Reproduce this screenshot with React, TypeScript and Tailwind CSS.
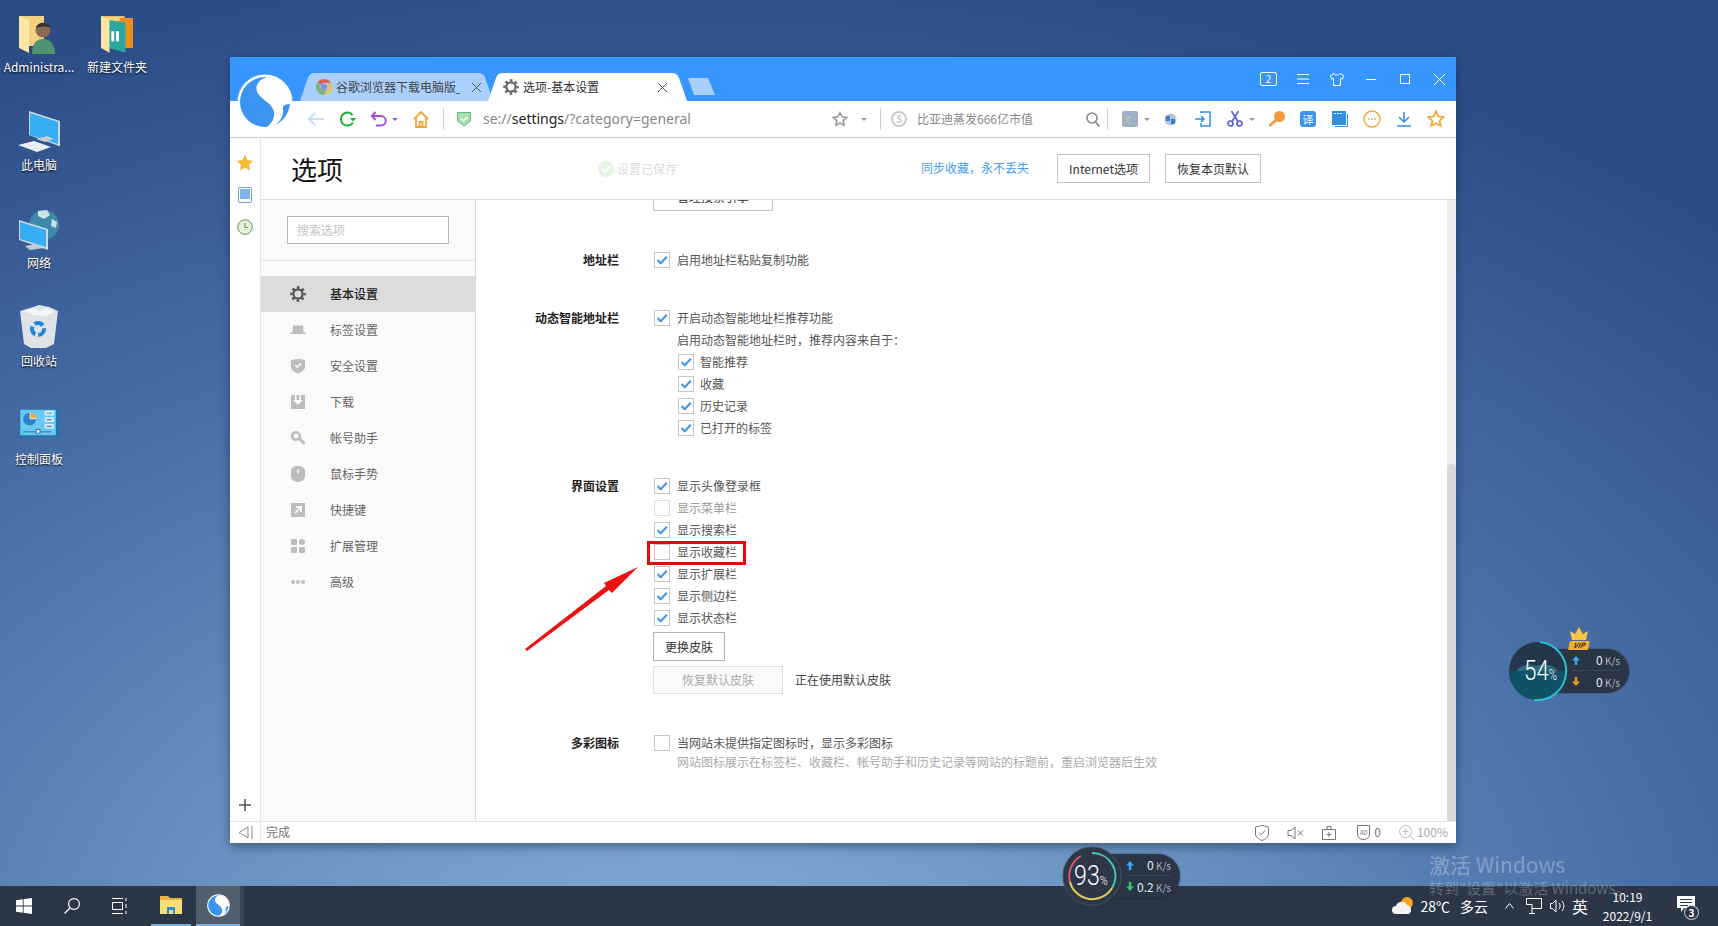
import type { ReactNode } from "react";

const sideItems = ["基本设置", "标签设置", "安全设置", "下载", "帐号助手", "鼠标手势", "快捷键", "扩展管理", "高级"];

function Gear({ size = 16, color = "#666" }: { size?: number; color?: string }) {
  return (
    <svg width={size} height={size} viewBox="0 0 16 16" fill="none" stroke={color}>
      <circle cx="8" cy="8" r="4.6" strokeWidth="2.2" />
      <circle cx="8" cy="8" r="6.6" strokeWidth="2.4" strokeDasharray="2.6 2.58" strokeDashoffset="1.3" />
    </svg>
  );
}

function SideIcon({ index }: { index: number }) {
  const c = "#bdbdbd";
  if (index === 0) return <Gear color="#555" />;
  return (
    <svg width="16" height="16" viewBox="0 0 16 16" fill={c}>
      {index === 1 && <path d="M3 3.5h10l.6 7H2.4zM0 10.5h16V12H0z" />}
      {index === 2 && <path fillRule="evenodd" d="M1 2c2.500-.4 5-1 7-1s4.500.6 7 1v7c0 3-4 5.500-7 6.500C5 14.500 1 12 1 9zM4.500 7.500 7.300 10.200 11.800 6 10.600 5 7.300 8 5.700 6.400z" />}
      {index === 3 && <path fillRule="evenodd" d="M1 1h4v5H3l5 5 5-5h-2V1h4v14H1zM6.500 1h3v5h-3z" />}
      {index === 4 && <path fillRule="evenodd" d="M6 1a5 5 0 0 1 4.700 6.700l4.800 5-1.800 2.300-5-5A5 5 0 1 1 6 1zm0 2.500a2.500 2.500 0 1 0 0 5 2.500 2.500 0 0 0 0-5z" />}
      {index === 5 && <path fillRule="evenodd" d="M8 0c4 0 7 2 7 5v5c0 3.500-3 6-7 6s-7-2.500-7-6V5c0-3 3-5 7-5zM7.200 3v4.500h1.600V3z" />}
      {index === 6 && <path fillRule="evenodd" d="M1 1h14v14H1zM6 4v2h2.700L4.300 10.400l1.300 1.300L10 7.300V10h2V4z" />}
      {index === 7 && (
        <>
          <rect x="1" y="1" width="6" height="6" rx="1" />
          <circle cx="12" cy="4" r="3" />
          <rect x="1" y="9" width="6" height="6" rx="1" />
          <rect x="9" y="9" width="6" height="6" rx="1" />
        </>
      )}
      {index === 8 && (
        <>
          <circle cx="3" cy="8" r="2" />
          <circle cx="8" cy="8" r="2" />
          <circle cx="13" cy="8" r="2" />
        </>
      )}
    </svg>
  );
}

function SogouLogo({ size }: { size: number }) {
  return (
    <svg width={size} height={size} viewBox="0 0 56 56">
      <circle cx="28" cy="28" r="27.500" fill="#fff" />
      <circle cx="28" cy="28" r="25" fill="#3a94f0" />
      <path fill="#fff" d="M30 3C19 6 17 15 22 21 27 27 35 29 37 38 38 44 35 49 29 54L36 53C43 48 47 42 46 35 45 31 49 30 54 30A26 26 0 0 0 30 3Z" />
    </svg>
  );
}

function ChromeIcon() {
  return (
    <svg width="16" height="16" viewBox="0 0 16 16">
      <path fill="#d9645a" d="M8 0a8 8 0 0 1 7 4H8a4 4 0 0 0-3.700 2.500L1.700 3A8 8 0 0 1 8 0z" />
      <path fill="#e8c25a" d="M15 4a8 8 0 0 1-7 12l3.400-6A4 4 0 0 0 11.500 4z" />
      <path fill="#79b77c" d="M1.700 3l2.800 5a4 4 0 0 0 6.500 2L8 16A8 8 0 0 1 1.700 3z" />
      <circle cx="8" cy="8" r="3.200" fill="#8d8ee0" />
    </svg>
  );
}

function Caret({ color = "#999" }: { color?: string }) {
  return <span className="inline-block h-0 w-0 border-x-[3px] border-t-[3px] border-x-transparent" style={{ borderTopColor: color }} />;
}

function TabShape({ fill }: { fill: string }) {
  return (
    <svg className="absolute inset-0 h-full w-full" viewBox="0 0 200 28" preserveAspectRatio="none">
      <path fill={fill} d="M0 28 8 5Q10 0 15 0H185Q190 0 192 5L200 28Z" />
    </svg>
  );
}

function Check({ on = true, dim = false }: { on?: boolean; dim?: boolean }) {
  return (
    <span className={`flex h-4 w-4 shrink-0 items-center justify-center border bg-white ${dim ? "border-[#ddd]" : "border-[#c6c6c6]"}`}>
      {on && (
        <svg width="12" height="12" viewBox="0 0 12 12" fill="none" stroke="#3d94ec" strokeWidth="2">
          <path d="M1.500 6 4.700 9.200 10.800 2.800" />
        </svg>
      )}
    </span>
  );
}

function CheckRow({ label, on = true, dim = false, sub = false }: { label: string; on?: boolean; dim?: boolean; sub?: boolean }) {
  return (
    <div className={`flex h-[22px] items-center ${sub ? "ml-6 gap-1.5" : "gap-[7px]"}`}>
      <Check on={on} dim={dim} />
      <span className={`text-xs leading-4 ${dim ? "text-[#999]" : "text-[#555]"}`}>{label}</span>
    </div>
  );
}

function Section({ title, mt, children }: { title: string; mt: string; children: ReactNode }) {
  return (
    <section className={`flex ${mt}`}>
      <h3 className="h-[22px] w-[143px] text-right text-xs font-bold leading-[22px] text-[#222]">{title}</h3>
      <div className="ml-[35px]">{children}</div>
    </section>
  );
}

function DesktopIcon({ pos, label, children }: { pos: string; label: string; children: ReactNode }) {
  return (
    <div className={`absolute flex w-[78px] flex-col items-center ${pos}`}>
      <div className="flex h-[44px] items-end">{children}</div>
      <span className="mt-1 whitespace-nowrap text-xs leading-4 text-white [text-shadow:0_1px_2px_rgba(0,0,0,0.95)]">{label}</span>
    </div>
  );
}

function SpeedWidget({
  pos,
  circle,
  children,
  up,
  down,
  downColor,
}: {
  pos: string;
  circle: ReactNode;
  children: ReactNode;
  up: string;
  down: string;
  downColor: string;
}) {
  return (
    <div className={`absolute ${pos}`}>
      <div className="absolute left-[28px] right-0 top-[8px] flex h-[44px] flex-col justify-center rounded-r-full bg-[#2a3545] pl-[36px] pr-[9px] text-[#e8edf2] shadow-[0_0_2px_rgba(0,0,0,0.5)]">
        <div className="flex h-[21px] items-center justify-between border-b border-[#3a4656]">
          <svg width="8" height="9" viewBox="0 0 8 9" fill="#3ea6ea"><path d="M4 0l4 4.500H5.300V9H2.700V4.500H0z" /></svg>
          <span className="text-[12px] leading-none">{up}<span className="text-[10px] text-[#aab4c0]"> K/s</span></span>
        </div>
        <div className="flex h-[21px] items-center justify-between">
          <svg width="8" height="9" viewBox="0 0 8 9" fill={downColor}><path d="M4 9 0 4.500H2.700V0H5.300V4.500H8z" /></svg>
          <span className="text-[12px] leading-none">{down}<span className="text-[10px] text-[#aab4c0]"> K/s</span></span>
        </div>
      </div>
      {circle}
      {children}
    </div>
  );
}

export default function App() {
  return (
    <div className="relative flex h-[926px] w-[1718px] flex-col overflow-hidden bg-[radial-gradient(ellipse_90%_110%_at_40%_105%,#84abd5_0%,#6b93c2_30%,#4a70a8_62%,#2c4c87_100%)] [font-family:'Noto_Sans_CJK_SC','Noto_Sans',sans-serif]">
      <DesktopIcon pos="left-0 top-[11px]" label="Administra...">
        <svg width="40" height="42" viewBox="0 0 40 42">
          <path fill="#f2d27c" d="M0 3h25v30H0z" />
          <path fill="#fbe6a6" d="M0 3l10 4v33L0 35z" />
          <circle cx="24" cy="17" r="7.500" fill="#8a6a52" />
          <path fill="#33302e" d="M17 15c1-6 13-7 15 0-4-2-10-2-15 0z" />
          <path fill="#4d9470" d="M13 41c0-10 4-15 11-15s12 5 12 15z" />
        </svg>
      </DesktopIcon>
      <DesktopIcon pos="left-[78px] top-[11px]" label="新建文件夹">
        <svg width="32" height="42" viewBox="0 0 34 42">
          <path fill="#f2d27c" d="M0 2h25v6H0z" />
          <path fill="#ef8d1c" d="M20 4h14v32H20z" />
          <path fill="#2aa7a0" d="M8 6l18 3v32L8 36z" />
          <path fill="#fff" d="M11 18h3v11h-3zM16 18h3v11h-3z" />
          <path fill="#fbe6a6" d="M0 2l9 4v35L0 36z" />
        </svg>
      </DesktopIcon>
      <DesktopIcon pos="left-0 top-[109px]" label="此电脑">
        <svg width="44" height="42" viewBox="0 0 44 42">
          <path fill="#cfd8e0" d="M12 0l31 10v25h-1L12 24z" />
          <path fill="#35aef5" d="M13 2l28 9v22L13 24z" />
          <path fill="#c6ccd2" d="M19 28l11-3 7 3-9 3z" />
          <path fill="#e9eef2" d="M1 34l16-4 17 6-14 5z" />
        </svg>
      </DesktopIcon>
      <DesktopIcon pos="left-0 top-[207px]" label="网络">
        <svg width="42" height="42" viewBox="0 0 42 42">
          <circle cx="26" cy="16" r="15" fill="#3f8aa8" />
          <path fill="#cfe3ea" d="M20 2l9-1 3 5-6 4-6-3zM34 10l5 3-1 6-5-2z" />
          <path fill="#cfd8e0" d="M1 11l29 9v21L1 31z" />
          <path fill="#35aef5" d="M2 13l26 8v17L2 30z" />
          <path fill="#c6ccd2" d="M7 37l12-2 7 4-14 2z" />
        </svg>
      </DesktopIcon>
      <DesktopIcon pos="left-0 top-[305px]" label="回收站">
        <svg width="38" height="44" viewBox="0 0 38 44">
          <path fill="#dfe3e7" d="M0 6l10-3 9-3 10 2 9 4-4 33-8 4H11l-7-4z" />
          <path fill="#f5f6f7" d="M4 6l10-3 5 3 8-3 7 4-8 4-12-1z" />
          <circle cx="18" cy="24" r="6" fill="none" stroke="#1e86d2" strokeWidth="4" strokeDasharray="9 3" />
        </svg>
      </DesktopIcon>
      <DesktopIcon pos="left-0 top-[403px]" label="控制面板">
        <svg className="mb-[10px]" width="42" height="30" viewBox="0 0 42 32">
          <path fill="#1d74b0" d="M0 2h42v30H0z" />
          <path fill="#6ac6f2" d="M1 3h38v27H1z" />
          <circle cx="11" cy="13" r="7" fill="#e6f5fc" />
          <path fill="#2a83c4" d="M11 13V6a7 7 0 1 0 7 7z" />
          <path fill="#f0a83a" d="M12 6a7 7 0 0 1 6 6h-6z" />
          <path fill="#d7eefa" d="M27 4h10v5H27zM27 11h10v5H27zM27 18h10v5H27z" />
          <path fill="#1d74b0" d="M29 6h6v1h-6zM29 13h6v1h-6zM29 20h6v1h-6z" />
          <path fill="#2a6fa6" d="M4 26h30v1H4z" />
          <rect x="18" y="24" width="4" height="4" fill="#fff" stroke="#2a6fa6" />
        </svg>
      </DesktopIcon>

      <div className="absolute left-[230px] top-[57px] flex h-[786px] w-[1226px] flex-col bg-white shadow-[0_3px_10px_rgba(20,40,70,0.55)]">
        <div className="relative flex h-[44px] shrink-0 items-center bg-[#3796fe] pl-[70px] pr-[11px]">
          <div className="absolute left-[7px] top-[17px] z-10">
            <SogouLogo size={56} />
          </div>
          <div className="relative flex h-[28px] w-[193px] items-center self-end">
            <TabShape fill="#a9d0fd" />
            <div className="relative ml-4 flex items-center gap-1">
              <ChromeIcon />
              <span className="w-[124px] overflow-hidden whitespace-nowrap text-xs leading-4 text-[#444]">谷歌浏览器下载电脑版_谷</span>
            </div>
            <svg className="relative ml-3" width="9" height="9" viewBox="0 0 9 9" stroke="#555"><path d="M0 0l9 9M9 0 0 9" /></svg>
          </div>
          <div className="relative -ml-[5px] flex h-[28px] w-[199px] items-center self-end">
            <TabShape fill="#fff" />
            <div className="relative ml-[15px] flex items-center gap-1">
              <Gear />
              <span className="whitespace-nowrap text-xs leading-4 text-[#333]">选项-基本设置</span>
            </div>
            <svg className="relative ml-[59px]" width="9" height="9" viewBox="0 0 9 9" stroke="#555"><path d="M0 0l9 9M9 0 0 9" /></svg>
          </div>
          <svg className="mb-[6px] self-end" width="29" height="17" viewBox="0 0 29 17">
            <path fill="#a9d0fd" d="M1 0h20l7 17H7z" />
          </svg>
          <div className="ml-auto flex items-center text-white">
            <span className="flex h-[14px] w-[17px] items-center justify-center rounded-[2px] border border-white text-[10px] leading-none">2</span>
            <svg className="ml-5" width="12" height="10" viewBox="0 0 12 10" stroke="#fff"><path d="M0 .5h12M0 5h12M0 9.500h12" /></svg>
            <svg className="ml-[21px]" width="14" height="13" viewBox="0 0 14 13" fill="none" stroke="#fff"><path d="M4 .5 .5 2.500 1.500 6 3.500 5.500V12.500H10.500V5.500L12.500 6 13.500 2.500 10 .5C9 2.500 5 2.500 4 .5z" /></svg>
            <span className="ml-[22px] h-px w-[10px] bg-white" />
            <span className="ml-6 h-[10px] w-[10px] border border-white" />
            <svg className="ml-6" width="11" height="11" viewBox="0 0 11 11" stroke="#fff"><path d="M0 0l11 11M11 0 0 11" /></svg>
          </div>
        </div>

        <div className="flex h-[37px] shrink-0 items-center border-b border-[#cdcdcd] pl-[78px]">
          <svg width="16" height="14" viewBox="0 0 16 14" fill="none" stroke="#b7d7f8" strokeWidth="1.600"><path d="M16 7H1M7 1 1 7l6 6" /></svg>
          <svg className="ml-[15px]" width="17" height="16" viewBox="0 0 17 16" fill="none" stroke="#1fb038" strokeWidth="2"><path d="M14 11.500A6.500 6.500 0 1 1 13.500 4" /><path fill="#1fb038" stroke="none" d="M11 7h6l-3 3.500z" /></svg>
          <svg className="ml-[15px]" width="16" height="16" viewBox="0 0 16 16" fill="none" stroke="#a04fd8" strokeWidth="2"><path d="M1 5h9a4.500 4.500 0 0 1 0 9.500H5M4.500 1 1 5l3.500 4" /></svg>
          <span className="ml-[5px] flex"><Caret color="#a04fd8" /></span>
          <svg className="ml-[15px]" width="16" height="17" viewBox="0 0 16 17" fill="none" stroke="#f0a83a" strokeWidth="1.800"><path d="M1 8 8 1l7 7M3 6.500V16h10V6.500M6.500 16v-5h3v5" /></svg>
          <span className="ml-[14px] h-[22px] w-px bg-[#d0d0d0]" />
          <svg className="ml-[13px]" width="14" height="16" viewBox="0 0 14 16"><path fill="#a9dcb4" stroke="#62bd78" d="M.5 1.500h13V10L7 15 .5 10z" /><path fill="none" stroke="#fff" strokeWidth="1.500" d="M4 7.500l2.500 2.500L10.500 6" /></svg>
          <div className="ml-3 w-[349px] whitespace-nowrap text-[14px] leading-5 text-[#888] [font-family:'Noto_Sans',sans-serif]">
            se://<span className="text-[#222]">settings</span>/?category=general
          </div>
          <svg width="16" height="16" viewBox="0 0 16 16" fill="none" stroke="#999" strokeWidth="1.500"><path d="M8 1.500l2 4.300 4.700.6-3.500 3.200.9 4.700L8 11.900l-4.100 2.400.9-4.700L1.300 6.400 6 5.800z" /></svg>
          <span className="ml-[13px] flex"><Caret /></span>
          <span className="ml-[13px] h-[22px] w-px bg-[#d0d0d0]" />
          <span className="ml-[10px] flex h-4 w-4 items-center justify-center rounded-full border-2 border-[#ccc] text-[10px] font-bold leading-none text-[#ccc]">S</span>
          <span className="ml-[10px] w-[169px] whitespace-nowrap text-xs leading-4 text-[#888]">比亚迪蒸发666亿市值</span>
          <svg width="14" height="15" viewBox="0 0 14 15" fill="none" stroke="#888" strokeWidth="1.600"><circle cx="6" cy="6" r="5" /><path d="M9.500 10l4 4.500" /></svg>
          <span className="ml-[7px] h-[22px] w-px bg-[#d0d0d0]" />
          <span className="ml-[14px] flex h-4 w-4 items-center justify-center rounded-[2px] bg-[#9fb0c4] text-[11px] leading-none text-[#f4dc8a]">☾</span>
          <span className="ml-1.5 flex"><Caret /></span>
          <svg className="ml-[14px]" width="13" height="15" viewBox="0 0 13 15"><circle cx="6.500" cy="7.500" r="6" fill="#b8c6d4" /><path fill="#3a7fd0" d="M2 4h4v5H2zM7 7h4v5H7z" /></svg>
          <svg className="ml-[18px]" width="16" height="16" viewBox="0 0 16 16" fill="none" stroke="#2e8fe8" strokeWidth="1.500"><path d="M6 2V1h9v14H6v-3M0 8h9M6 5l3 3-3 3" /></svg>
          <svg className="ml-4" width="16" height="16" viewBox="0 0 16 16" fill="none" stroke="#5a5fd8" strokeWidth="1.700"><circle cx="3.500" cy="12.500" r="2.500" /><circle cx="12.500" cy="12.500" r="2.500" /><path d="M5 10.500 11.500 0M11 10.500 4.500 0" /></svg>
          <span className="ml-1.5 flex"><Caret /></span>
          <svg className="ml-[13px]" width="17" height="16" viewBox="0 0 17 16"><circle cx="11.500" cy="5.500" r="5.500" fill="#ef9b3c" /><path fill="none" stroke="#ef9b3c" strokeWidth="2.500" d="M8 9 1.500 15" /></svg>
          <span className="ml-[15px] flex h-4 w-4 items-center justify-center rounded-[3px] bg-[#3a94f0] text-[11px] leading-none text-white">译</span>
          <svg className="ml-4" width="16" height="16" viewBox="0 0 16 16"><path fill="#2e8fe8" d="M0 0h14v14H0z" /><path fill="#fff" d="M2 2h2v1H2zM5 2h2v1H5zM8 2h2v1H8z" /><path fill="none" stroke="#2e8fe8" d="M15.500 3v12.500H3" /></svg>
          <svg className="ml-[15px]" width="18" height="18" viewBox="0 0 18 18" fill="none" stroke="#f2a93b" strokeWidth="1.500"><circle cx="9" cy="9" r="8" /><path stroke="#c9a55a" strokeDasharray="1.500 1.500" d="M5 9h8" /></svg>
          <svg className="ml-4" width="14" height="15" viewBox="0 0 14 15" fill="none" stroke="#2e8fe8" strokeWidth="1.500"><path d="M7 0v10M2 5l5 5 5-5M0 14h14" /></svg>
          <svg className="ml-4" width="18" height="18" viewBox="0 0 18 18" fill="none" stroke="#f2a93b" strokeWidth="1.800"><path d="M9 1.500l2.300 5 5.300.6-4 3.600 1.100 5.300L9 13.300l-4.700 2.700 1.100-5.300-4-3.600 5.300-.6z" /></svg>
        </div>

        <div className="flex min-h-0 flex-1">
          <aside className="flex w-[31px] shrink-0 flex-col items-center gap-4 border-r border-[#e6e6e6] pb-[10px] pt-[17px]">
            <svg width="16" height="16" viewBox="0 0 16 16"><path fill="#f8bc32" stroke="#e6a21e" strokeWidth=".5" d="M8 .5l2.300 5 5.200.6-3.900 3.600 1.100 5.300L8 12.300 3.300 15l1.100-5.300L.5 6.100l5.200-.6z" /></svg>
            <svg width="14" height="16" viewBox="0 0 14 16"><rect x=".5" y=".5" width="13" height="15" rx="1.500" fill="#fff" stroke="#6f9fd0" /><rect x="2" y="2" width="10" height="10" fill="#7fb2e6" /></svg>
            <svg width="16" height="16" viewBox="0 0 16 16" fill="#e4f2d8" stroke="#6d8f64"><circle cx="8" cy="8" r="7.300" /><path fill="none" d="M8 4v4.500h3" /></svg>
            <svg className="mt-auto" width="12" height="12" viewBox="0 0 12 12" stroke="#555" strokeWidth="1.600"><path d="M6 0v12M0 6h12" /></svg>
          </aside>

          <div className="flex min-w-0 flex-1 flex-col">
            <header className="z-10 flex h-[62px] shrink-0 items-center border-b border-[#dcdcdc] bg-white pl-[30px] pr-[195px]">
              <h1 className="text-[26px] leading-8 text-[#111]">选项</h1>
              <div className="ml-[255px] flex items-center gap-[3px] text-xs leading-4 text-[#dcdcdc]">
                <svg width="16" height="16" viewBox="0 0 16 16"><circle cx="8" cy="8" r="8" fill="#e6f4e6" /><path fill="none" stroke="#fff" strokeWidth="2" d="M4 8l3 3 5-6" /></svg>
                设置已保存
              </div>
              <a className="-mt-0.5 ml-auto text-xs leading-4 text-[#4a9be8]">同步收藏，永不丢失</a>
              <button className="ml-7 flex h-[29px] w-[93px] items-center justify-center border border-[#c4c4c4] text-xs leading-4 text-[#333]" type="button">Internet选项</button>
              <button className="ml-[15px] flex h-[29px] w-[96px] items-center justify-center border border-[#c4c4c4] text-xs leading-4 text-[#333]" type="button">恢复本页默认</button>
            </header>

            <div className="flex min-h-0 flex-1">
              <nav className="w-[215px] shrink-0 border-r border-[#dcdcdc] bg-[#fafafa] pt-4">
                <div className="mb-[15px] border-b border-[#e5e5e5] pb-4 pl-[26px]">
                  <input className="block h-7 w-[162px] border border-[#b8b8b8] bg-white px-[9px] pb-[2px] text-xs placeholder:text-[#c4c4c4]" placeholder="搜索选项" />
                </div>
                {sideItems.map((item, index) => (
                  <div className={`flex h-9 items-center gap-6 pl-[29px] text-xs leading-4 ${index === 0 ? "bg-[#dcdcdc] font-medium text-[#222]" : "text-[#666]"}`} key={item}>
                    <SideIcon index={index} />
                    <span>{item}</span>
                  </div>
                ))}
              </nav>

              <main className="min-w-0 flex-1 overflow-hidden">
                <div className="-mt-[17px] ml-[177px] flex h-[28px] w-[120px] items-center justify-center border border-[#c4c4c4] text-xs leading-4 text-[#333]">管理搜索引擎</div>
                <Section title="地址栏" mt="mt-[38px]">
                  <CheckRow label="启用地址栏粘贴复制功能" />
                </Section>
                <Section title="动态智能地址栏" mt="mt-9">
                  <CheckRow label="开启动态智能地址栏推荐功能" />
                  <p className="ml-[23px] h-[22px] text-xs leading-[22px] text-[#555]">启用动态智能地址栏时，推荐内容来自于：</p>
                  <CheckRow sub label="智能推荐" />
                  <CheckRow sub label="收藏" />
                  <CheckRow sub label="历史记录" />
                  <CheckRow sub label="已打开的标签" />
                </Section>
                <Section title="界面设置" mt="mt-9">
                  <CheckRow label="显示头像登录框" />
                  <CheckRow dim on={false} label="显示菜单栏" />
                  <CheckRow label="显示搜索栏" />
                  <CheckRow on={false} label="显示收藏栏" />
                  <CheckRow label="显示扩展栏" />
                  <CheckRow label="显示侧边栏" />
                  <CheckRow label="显示状态栏" />
                  <button className="-ml-px mt-[3px] flex h-[29px] w-[72px] items-center justify-center border border-[#b4b4b4] text-xs leading-4 text-[#333]" type="button">更换皮肤</button>
                  <div className="-ml-px mt-[5px] flex items-center">
                    <span className="flex h-[28px] w-[130px] items-center justify-center border border-[#dedede] bg-[#fafafa] text-xs leading-4 text-[#aaa]">恢复默认皮肤</span>
                    <span className="ml-3 text-xs leading-4 text-[#444]">正在使用默认皮肤</span>
                  </div>
                </Section>
                <Section title="多彩图标" mt="mt-[38px]">
                  <CheckRow on={false} label="当网站未提供指定图标时，显示多彩图标" />
                  <p className="ml-[23px] whitespace-nowrap text-xs leading-4 text-[#aaa]">网站图标展示在标签栏、收藏栏、帐号助手和历史记录等网站的标题前，重启浏览器后生效</p>
                </Section>
              </main>

              <div className="flex w-[9px] shrink-0 flex-col bg-[#eeeeee] pt-[264px]">
                <div className="flex-1 rounded-t-[4px] bg-[#d8d8d8]" />
              </div>
            </div>
          </div>
        </div>

        <footer className="flex h-[22px] shrink-0 items-center border-t border-[#e5e5e5] pr-2">
          <div className="flex h-full w-[31px] items-center justify-center gap-0.5 border-r border-[#e6e6e6]">
            <svg width="15" height="13" viewBox="0 0 15 13" fill="none" stroke="#888"><path d="M10 1 1 6.500 10 12zM14 0v13" /></svg>
          </div>
          <span className="ml-[5px] pb-0.5 text-xs leading-4 text-[#777]">完成</span>
          <svg className="ml-auto" width="14" height="16" viewBox="0 0 14 16" fill="none" stroke="#777"><path d="M.5 2 7 .5 13.500 2v7c0 3-3 5-6.500 6.500C3.500 14 .5 12 .5 9z" /><path d="M4 7.500l2.300 2.300L10 5.500" /></svg>
          <svg className="ml-[18px]" width="17" height="14" viewBox="0 0 17 14" fill="none" stroke="#777"><path d="M1 4.500h3L8 1v12L4 9.500H1zM11 4.500l5 5M16 4.500l-5 5" /></svg>
          <svg className="ml-[18px]" width="14" height="14" viewBox="0 0 14 14" fill="none" stroke="#777"><path d="M.5 3.500h13v10H.5zM5 3.500V.5h4v3M7 6v5M4.500 8.500h5" /></svg>
          <span className="ml-[21px] flex h-[15px] w-[13px] items-center justify-center rounded-b-md border border-[#777] text-[6px] leading-none text-[#777]">AD</span>
          <span className="ml-1 pb-0.5 text-xs leading-4 text-[#777]">0</span>
          <svg className="ml-[18px]" width="15" height="15" viewBox="0 0 15 15" fill="none" stroke="#bbb"><circle cx="6.500" cy="6.500" r="6" /><path d="M11 11l4 4M6.500 3.500v6M3.500 6.500h6" /></svg>
          <span className="ml-[3px] pb-0.5 text-xs leading-4 text-[#aaa]">100%</span>
        </footer>
      </div>

      <div className="absolute left-[647px] top-[541px] h-6 w-[99px] border-[3px] border-[#e00b0b]" />
      <svg className="absolute left-[520px] top-[560px]" width="125" height="95" viewBox="520 560 125 95">
        <path fill="#ee1111" d="M525 649 606 586 604 583 638 567 612 593 609 590 527 651Z" />
      </svg>

      <SpeedWidget
        pos="left-[1062px] top-[846px] h-[60px] w-[118px] z-10"
        up="0"
        down="0.2"
        downColor="#3fc06a"
        circle={
          <svg className="absolute left-0 top-0" width="60" height="60" viewBox="0 0 60 60" fill="none">
            <circle cx="30" cy="30" r="29" fill="#2d3746" stroke="#444f5e" />
            <path stroke="#e0556a" strokeWidth="2" d="M8 36A23 23 0 0 1 19 10" />
            <path stroke="#40c8b8" strokeWidth="2" d="M30 7A23 23 0 0 1 50 42" />
            <path stroke="#e6d05a" strokeWidth="2" d="M50 42A23 23 0 0 1 8 36" />
          </svg>
        }
      >
        <span className="absolute left-[12px] top-[14px] origin-left scale-x-[0.83] whitespace-nowrap text-[28px] font-light leading-8 text-white [font-family:Roboto,sans-serif]">93<span className="text-[13px]">%</span></span>
      </SpeedWidget>

      <SpeedWidget
        pos="left-[1508px] top-[641px] h-[60px] w-[121px]"
        up="0"
        down="0"
        downColor="#e89a1e"
        circle={
          <svg className="absolute left-0 top-0" width="60" height="60" viewBox="0 0 60 60" fill="none">
            <circle cx="30" cy="30" r="29" fill="#23364c" />
            <path fill="#0f5268" d="M1 30h58a29 29 0 0 1-58 0z" />
            <path fill="#2a6a7a" d="M8 30c6-8 14-7 20-5 8-3 18-1 22 5z" />
            <path stroke="#28c4d4" strokeWidth="2" d="M32 1A29 29 0 0 1 26 59" />
          </svg>
        }
      >
        <span className="absolute left-[16px] top-[14px] origin-left scale-x-[0.8] whitespace-nowrap text-[28px] font-light leading-8 text-white [font-family:Roboto,sans-serif]">54<span className="text-[14px]">%</span></span>
        <svg className="absolute left-[62px] -top-[14px]" width="18" height="14" viewBox="0 0 18 14">
          <path fill="#f6c54a" d="M2 13 0 4l5 3 4-7 4 7 5-3-2 9z" />
        </svg>
        <span className="absolute left-[61px] top-0 flex h-[9px] w-[20px] -skew-x-12 items-center justify-center rounded-[1px] bg-[#f0b030] text-[7px] font-bold italic leading-none text-[#3a2a00]">VIP</span>
      </SpeedWidget>

      <div className="absolute left-[1429px] top-[851px] z-20 text-[21px] leading-[26px] text-white/30">激活 Windows</div>
      <div className="absolute left-[1429px] top-[878px] z-20 text-[15px] leading-5 text-white/25">转到"设置"以激活 Windows。</div>

      <div className="mt-auto flex h-10 shrink-0 items-center bg-[#2b3746] text-white">
        <div className="flex h-full w-12 items-center justify-center">
          <svg width="16" height="16" viewBox="0 0 16 16" fill="#fff"><path d="M0 2.300 6.800 1.300V7.600H0zM7.600 1.200 16 0V7.600H7.600zM0 8.400H6.800V14.700L0 13.700zM7.600 8.400H16V16L7.600 14.800z" /></svg>
        </div>
        <div className="flex h-full w-12 items-center justify-center">
          <svg width="16" height="16" viewBox="0 0 16 16" fill="none" stroke="#fff" strokeWidth="1.200"><circle cx="10" cy="6" r="5.400" /><path d="M6 10 .5 15.500" /></svg>
        </div>
        <div className="flex h-full w-12 items-center justify-center">
          <svg width="16" height="16" viewBox="0 0 16 16" fill="none" stroke="#fff"><path d="M0 .5h11M0 15.500h11M.5 4.500h10v7H.5zM14 0v3M14 6v4M14 13v3" /></svg>
        </div>
        <div className="ml-[7px] flex h-full w-10 items-center justify-center border-b-[2px] border-[#76aee0]">
          <svg width="22" height="18" viewBox="0 0 22 18"><path fill="#e8b93e" d="M0 0h8l2 2h12v16H0z" /><path fill="#f8dc78" d="M0 4h22v14H0z" /><path fill="#2d8bd0" d="M7 11h8v7h-2v-4H9v4H7z" /></svg>
        </div>
        <div className="ml-[5px] flex h-full w-11 items-center justify-center border-b-[2px] border-[#76aee0] bg-[#525e6c]">
          <SogouLogo size={23} />
        </div>
        <span className="h-full w-1 bg-[#3a4655]" />

        <svg className="ml-auto" width="22" height="20" viewBox="0 0 22 20"><circle cx="15" cy="7" r="6" fill="#f5a524" /><path fill="#f2f4f6" d="M4 18a4 4 0 0 1 0-8 6 6 0 0 1 11-1 5 5 0 0 1 2 9z" /></svg>
        <span className="ml-1.5 text-[14px] leading-5">28℃</span>
        <span className="ml-[10px] text-[14px] leading-5">多云</span>
        <svg className="ml-[17px]" width="9" height="6" viewBox="0 0 9 6" fill="none" stroke="#fff"><path d="M.5 5.500l4-5 4 5" /></svg>
        <svg className="ml-3" width="16" height="16" viewBox="0 0 16 16" fill="none" stroke="#fff"><path d="M.5.500h15v10H6M.5.500v6h5.500v9M3 15.500h6" /></svg>
        <svg className="ml-2" width="16" height="14" viewBox="0 0 16 14" fill="none" stroke="#fff"><path d="M.5 4.500h2L6 1v12L2.500 9.500h-2zM9 4c1.500 2 1.500 4 0 6M12 2c2.500 3 2.500 7 0 10" /></svg>
        <span className="ml-1.5 text-[16px] leading-5">英</span>
        <div className="ml-[14px] flex w-[51px] flex-col items-center whitespace-nowrap text-xs leading-[19px]">
          <span>10:19</span>
          <span>2022/9/1</span>
        </div>
        <div className="relative ml-6 mr-[23px] h-5 w-[18px]">
          <svg width="18" height="16" viewBox="0 0 18 16" fill="#fff"><path d="M0 0h18v12H7l-3 4v-4H0z" /><path stroke="#2b3746" d="M3 3.500h12M3 6.500h12M3 9.500h8" /></svg>
          <span className="absolute -bottom-1 -right-1 flex h-[15px] w-[15px] items-center justify-center rounded-full border border-white/70 bg-[#2b3746] text-[10px] font-bold leading-none">3</span>
        </div>
      </div>
    </div>
  );
}
